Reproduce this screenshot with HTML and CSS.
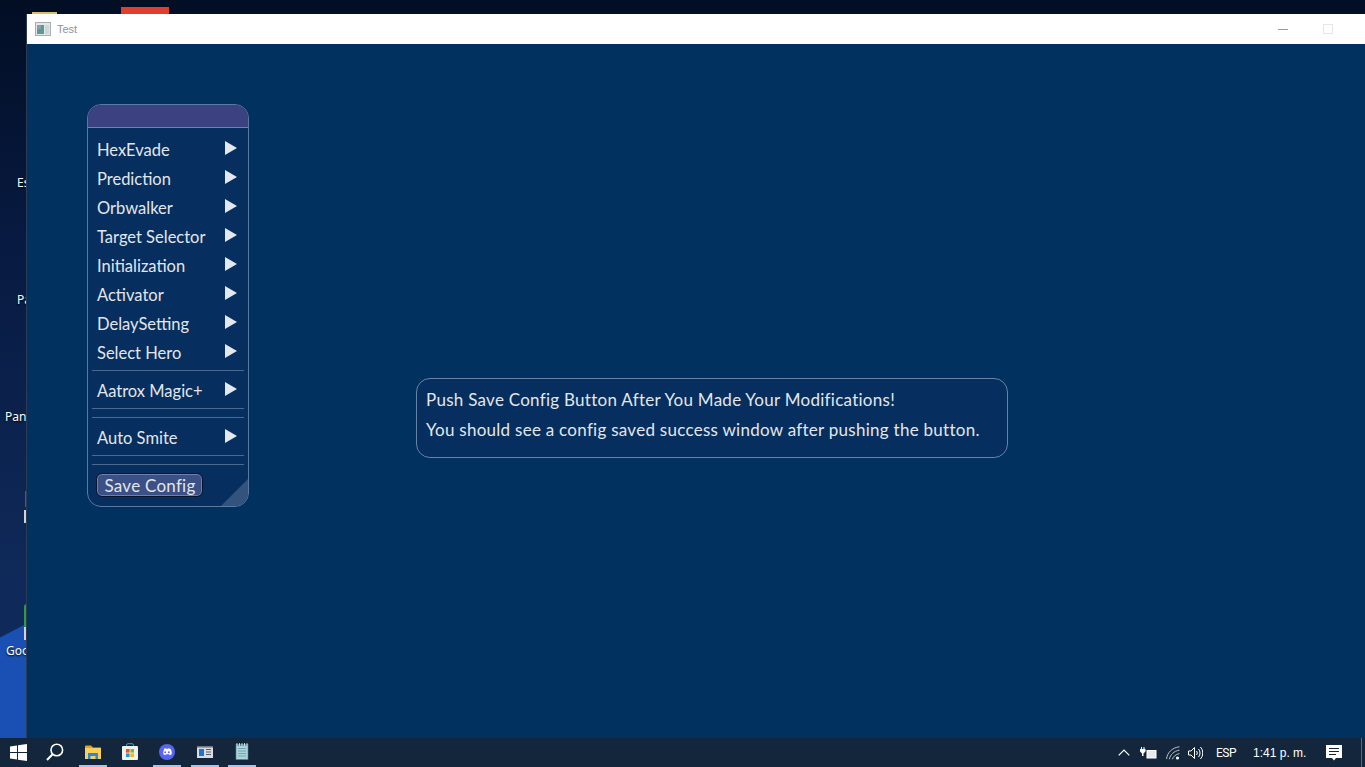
FILE: index.html
```html
<!DOCTYPE html>
<html lang="es">
<head>
<meta charset="utf-8">
<title>Test</title>
<link rel="stylesheet" href="styles.css">
</head>
<body>
<div class="screen">
  <main class="desktop">
    <svg class="wedge" viewBox="0 0 30 120" preserveAspectRatio="none"><polygon points="0,16 30,0 30,120 0,120" fill="#1a50b4"/></svg>
    <div class="peek peek-yellow"></div>
    <div class="peek peek-red"></div>
    <div class="peek peek-dot-red"></div>
    <div class="peek peek-dot-green"></div>
    <div class="peek peek-bar1"></div>
    <div class="peek peek-bar2"></div>
    <span class="dlabel l1">Es</span>
    <span class="dlabel l2">Pa</span>
    <span class="dlabel l3">Pan</span>
    <span class="dlabel l4">Goo</span>

    <section class="window">
      <header class="titlebar">
        <svg class="appicon" width="16" height="14" viewBox="0 0 16 14"><rect x=".5" y=".5" width="15" height="13" fill="#e4e6e8" stroke="#a9adb2"/><rect x="2" y="3" width="7" height="9" fill="#5b9a92"/><rect x="2" y="3" width="4" height="4" fill="#8f9ca8"/><rect x="10" y="3" width="4" height="9" fill="#cfd6d8"/></svg>
        <span class="wintitle">Test</span>
        <span class="winspacer"></span>
        <span class="winbtn"><span class="minimize"></span></span>
        <span class="winbtn"><span class="maximize"></span></span>
      </header>
      <div class="canvas">
        <nav class="menu">
          <div class="menu-head"></div>
          <div class="menu-body">
            <div class="group">
              <div class="row"><span>HexEvade</span><i class="arrow"></i></div>
              <div class="row"><span>Prediction</span><i class="arrow"></i></div>
              <div class="row"><span>Orbwalker</span><i class="arrow"></i></div>
              <div class="row"><span>Target Selector</span><i class="arrow"></i></div>
              <div class="row"><span>Initialization</span><i class="arrow"></i></div>
              <div class="row"><span>Activator</span><i class="arrow"></i></div>
              <div class="row"><span>DelaySetting</span><i class="arrow"></i></div>
              <div class="row"><span>Select Hero</span><i class="arrow"></i></div>
            </div>
            <hr class="sep sep-a">
            <div class="row row-solo"><span>Aatrox Magic+</span><i class="arrow"></i></div>
            <hr class="sep sep-b">
            <hr class="sep sep-c">
            <div class="row row-solo"><span>Auto Smite</span><i class="arrow"></i></div>
            <hr class="sep sep-d">
            <hr class="sep sep-c">
            <button class="save">Save Config</button>
          </div>
          <div class="grip"></div>
        </nav>
        <aside class="notice">
          <p>Push Save Config Button After You Made Your Modifications!</p>
          <p>You should see a config saved success window after pushing the button.</p>
        </aside>
      </div>
    </section>
  </main>

  <footer class="taskbar">
    <div class="slot-start"><svg width="17" height="17" viewBox="0 0 17 17" fill="#fff"><polygon points="0,2.4 7,1.4 7,8 0,8"/><polygon points="8,1.2 17,0 17,8 8,8"/><polygon points="0,9 7,9 7,15.6 0,14.6"/><polygon points="8,9 17,9 17,17 8,15.8"/></svg></div>
    <div class="slot"><svg width="18" height="18" viewBox="0 0 18 18" fill="none" stroke="#fff" stroke-width="1.6"><circle cx="10.8" cy="7" r="5.8"/><line x1="6.6" y1="11.2" x2="1" y2="17" stroke-width="2"/></svg></div>
    <div class="slot active"><svg width="16" height="14" viewBox="0 0 16 14"><path d="M0 1.5a1 1 0 0 1 1-1h5l2 2h8v11H0z" fill="#e3a51e"/><rect y="3" width="16" height="11" fill="#f7cf5a"/><path d="M3 8h10v6h-2.5v-3h-5v3H3z" fill="#2e86d6"/></svg></div>
    <div class="slot"><svg width="16" height="17" viewBox="0 0 16 17"><path d="M4.5 4V2.2a1.5 1.500 0 0 1 1.500-1.500h4a1.500 1.500 0 0 1 1.500 1.500V4" fill="none" stroke="#3aa0d8" stroke-width="1"/><rect y="3" width="16" height="14" rx="1" fill="#f1f1ee"/><rect x="4" y="6" width="3.6" height="3.6" fill="#e8502e"/><rect x="8.4" y="6" width="3.6" height="3.6" fill="#7fb92f"/><rect x="4" y="10.4" width="3.6" height="3.6" fill="#1e9ae0"/><rect x="8.4" y="10.4" width="3.6" height="3.6" fill="#f8b90f"/></svg></div>
    <div class="slot active"><svg width="16" height="16" viewBox="0 0 16 16"><circle cx="8" cy="8" r="8" fill="#5865f2"/><path d="M4.300 5.100C5.300 4.500 6.200 4.300 6.600 4.300l.3.5c.7-.1 1.500-.1 2.200 0l.3-.5c.4 0 1.300.2 2.300.8.9 1.600 1.200 3.400 1 5.100-.7.5-1.500.8-2.200 1l-.5-.8.8-.4-.2-.1c-1.300.6-2.900.6-4.200 0l-.2.1.8.4-.5.8c-.7-.2-1.500-.5-2.200-1-.2-1.900.2-3.600 1-5.100z" fill="#fff"/><circle cx="6.200" cy="8.200" r="1" fill="#5865f2"/><circle cx="9.800" cy="8.200" r="1" fill="#5865f2"/></svg></div>
    <div class="slot active"><svg width="16" height="12" viewBox="0 0 16 12"><rect width="16" height="12" fill="#d9dde2"/><rect y="0" width="16" height="1.600" fill="#6f7883"/><rect x="2" y="3" width="5" height="7" fill="#1976d2"/><rect x="9" y="3" width="5" height="1" fill="#56606c"/><rect x="9" y="5.500" width="5" height="1" fill="#56606c"/><rect x="9" y="8" width="5" height="1" fill="#56606c"/></svg></div>
    <div class="slot active"><svg width="15" height="17" viewBox="0 0 15 17"><rect x="1" y="1.500" width="12" height="15" fill="#a8d6dc" stroke="#5f7f88" stroke-width=".6"/><path d="M1 1.500h12v1.500H1z" fill="#4f8fa0"/><path d="M3 5.500h8M3 8h8M3 10.500h8M3 13h8" stroke="#6d97a3" stroke-width=".8"/><path d="M2 0v3M4.500 0v3M7 0v3M9.500 0v3M12 0v3" stroke="#e8eef0" stroke-width=".8"/></svg></div>
    <div class="taskspacer"></div>
    <div class="tray">
      <svg width="12" height="7" viewBox="0 0 12 7" fill="none" stroke="#fff" stroke-width="1.2"><path d="M.7 6.400 6 1l5.300 5.400"/></svg>
      <svg class="t-batt" width="17" height="12" viewBox="0 0 17 12"><path d="M1 0h1v2H1zM3.500 0h1v2h-1zM0 2h5.500v2.500L3.500 6.500V9h-1.500V6.500L0 4.500z" fill="#fff"/><rect x="7" y="3.500" width="9" height="7.500" fill="#e8ebee" stroke="#fff"/></svg>
      <svg class="t-wifi" width="14" height="14" viewBox="0 0 14 14" fill="none" stroke="#b9c0c7" stroke-width="1"><path d="M.6 13C1 7 6 1.600 13.400.8M3.400 13.200C4 9 8 4.800 13.400 4.200M6.400 13.300C7 11 9.500 8.300 13.400 7.600"/><circle cx="11.500" cy="12" r="1.600" fill="#fff" stroke="none"/></svg>
      <svg class="t-vol" width="15" height="14" viewBox="0 0 15 14" fill="none" stroke="#fff" stroke-width="1"><path d="M.5 5h2.500L6.500 1.500v11L3 9H.5z"/><path d="M8.500 5a3 3 0 0 1 0 4M10.500 3a6 6 0 0 1 0 8M12.500 1a9 9 0 0 1 0 12"/></svg>
      <span class="t-lang">ESP</span>
      <span class="t-time">1:41 p. m.</span>
      <svg class="t-note" width="16" height="16" viewBox="0 0 16 16"><path d="M0 0h16v13h-6l-2 2.500L6 13H0z" fill="#fff"/><path d="M3 3.500h10M3 6.500h10M3 9.500h7" stroke="#14263c" stroke-width="1"/></svg>
      <span class="t-show"></span>
    </div>
  </footer>
</div>
</body>
</html>
```
FILE: styles.css
```css
* { box-sizing: border-box; }
html, body { margin: 0; height: 100%; overflow: hidden; }
.screen { width: 1365px; height: 767px; display: flex; flex-direction: column; }

.desktop {
  position: relative; flex: 1; overflow: hidden;
  background: linear-gradient(180deg, #020e24 0%, #07193f 30%, #0f2a5a 80%);
}
.wedge { position: absolute; left: 0; bottom: 0; width: 30px; height: 116px; }
.peek { position: absolute; }
.peek-yellow { left: 32px; top: 12px; width: 25px; height: 2px; background: #d8bf6a; }
.peek-red { left: 121px; top: 7px; width: 48px; height: 7px; background: #e53c30; }
.peek-dot-red { left: 25px; top: 491px; width: 2px; height: 16px; background: #a8343c; }
.peek-dot-green { left: 24px; top: 604px; width: 3px; height: 24px; border-radius: 3px 0 0 3px; background: #2f9a3f; }
.peek-bar1 { left: 24px; top: 510px; width: 2px; height: 13px; background: #d0d4d8; }
.peek-bar2 { left: 24px; top: 627px; width: 2px; height: 13px; background: #d0d4d8; }
.dlabel {
  position: absolute; font: 12px/14px "Noto Sans", sans-serif; color: #fff;
  text-shadow: 0 1px 2px #000;
}
.l1 { left: 17px; top: 176px; }
.l2 { left: 17px; top: 293px; }
.l3 { left: 5px; top: 410px; }
.l4 { left: 6px; top: 644px; }

.window {
  position: absolute; left: 26px; top: 14px; right: 0; bottom: 0;
  display: flex; flex-direction: column;
  border-left: 1px solid #2e3b55;
  background: #00315f;
}
.titlebar {
  height: 30px; flex: none; background: #fff; display: flex; align-items: center;
  padding: 0 15px 0 8px;
}
.appicon { flex: none; }
.wintitle { margin-left: 6px; font: 11px "Liberation Sans", Arial, sans-serif; color: #8f9399; }
.winspacer { flex: 1; }
.winbtn { width: 45px; height: 30px; display: flex; align-items: center; justify-content: center; }
.minimize { width: 10px; height: 1px; background: #9b9b9b; }
.maximize { width: 10px; height: 10px; border: 1px solid #e6e6e6; }

.canvas { position: relative; flex: 1; font-family: "Lato", "Noto Sans", sans-serif; color: #e3e6ec; }
.menu {
  position: absolute; left: 60px; top: 60px; width: 162px; height: 403px;
  border: 1px solid #5b7a9f; border-radius: 14px; background: #062e5e; overflow: hidden;
}
.menu-head { height: 23px; background: #3c4182; border-bottom: 1px solid #6c84a8; }
.menu-body { padding: 7px 4px 0; }
.group { display: flex; flex-direction: column; }
.row {
  height: 29px; display: flex; align-items: center; justify-content: space-between;
  padding: 0 7px 0 5px; font-size: 16.5px; white-space: nowrap;
}
.arrow {
  width: 0; height: 0; margin-top: -3px;
  border-left: 12px solid #e3e7ee; border-top: 7px solid transparent; border-bottom: 7px solid transparent;
}
.sep { height: 1px; margin: 0; border: 0; background: #4a6a90; }
.sep-a { margin-top: 3px; }
.row-solo { height: 37px; }
.row-solo span { margin-top: 2px; }
.row-solo .arrow { margin-top: -1px; }
.sep-c { margin-top: 8px; }
.save {
  display: block; margin: 8px 0 0 4px; width: 107px; height: 24px; padding: 1px 0 0 1px;
  border: 1px solid #071430; border-radius: 6px; background: #3b5086;
  box-shadow: inset 0 0 0 1px #7080a8;
  font: 17px "Lato", "Noto Sans", sans-serif; letter-spacing: .25px; line-height: 20px; color: #e3e6ec;
}
.grip {
  position: absolute; right: 0; bottom: 0; width: 27px; height: 27px;
  background: #33537f; clip-path: polygon(100% 0, 100% 100%, 0 100%);
}
.notice {
  position: absolute; left: 389px; top: 334px; width: 592px; height: 80px;
  padding: 6px 9px; border: 1px solid #6783a8; border-radius: 14px; background: #062e5e;
  font-size: 17px; letter-spacing: .27px;
}
.notice p { margin: 0; height: 30px; line-height: 30px; white-space: nowrap; }

.taskbar { height: 29px; flex: none; background: #14263c; display: flex; align-items: stretch; }
.slot-start { width: 36.6px; display: flex; align-items: center; justify-content: center; }
.slot { width: 28px; margin: 0 4.7px; display: flex; align-items: center; justify-content: center; border-bottom: 2px solid transparent; }
.slot.active { border-bottom-color: #a8c4e6; }
.taskspacer { flex: 1; }
.tray { display: flex; align-items: center; width: 254px; position: relative; color: #fff; font: 12px "Liberation Sans", Arial, sans-serif; padding-left: 7px; }
.t-batt { margin-left: 10px; }
.t-wifi { margin-left: 9px; }
.t-vol { margin-left: 8px; }
.t-lang { margin-left: 13px; font-family: "Roboto", sans-serif; letter-spacing: -.5px; }
.t-time { margin-left: 17px; }
.t-note { margin-left: 20px; }
.t-show { position: absolute; right: 3px; top: 0; bottom: 0; width: 1px; background: #5c6a7c; }
```
